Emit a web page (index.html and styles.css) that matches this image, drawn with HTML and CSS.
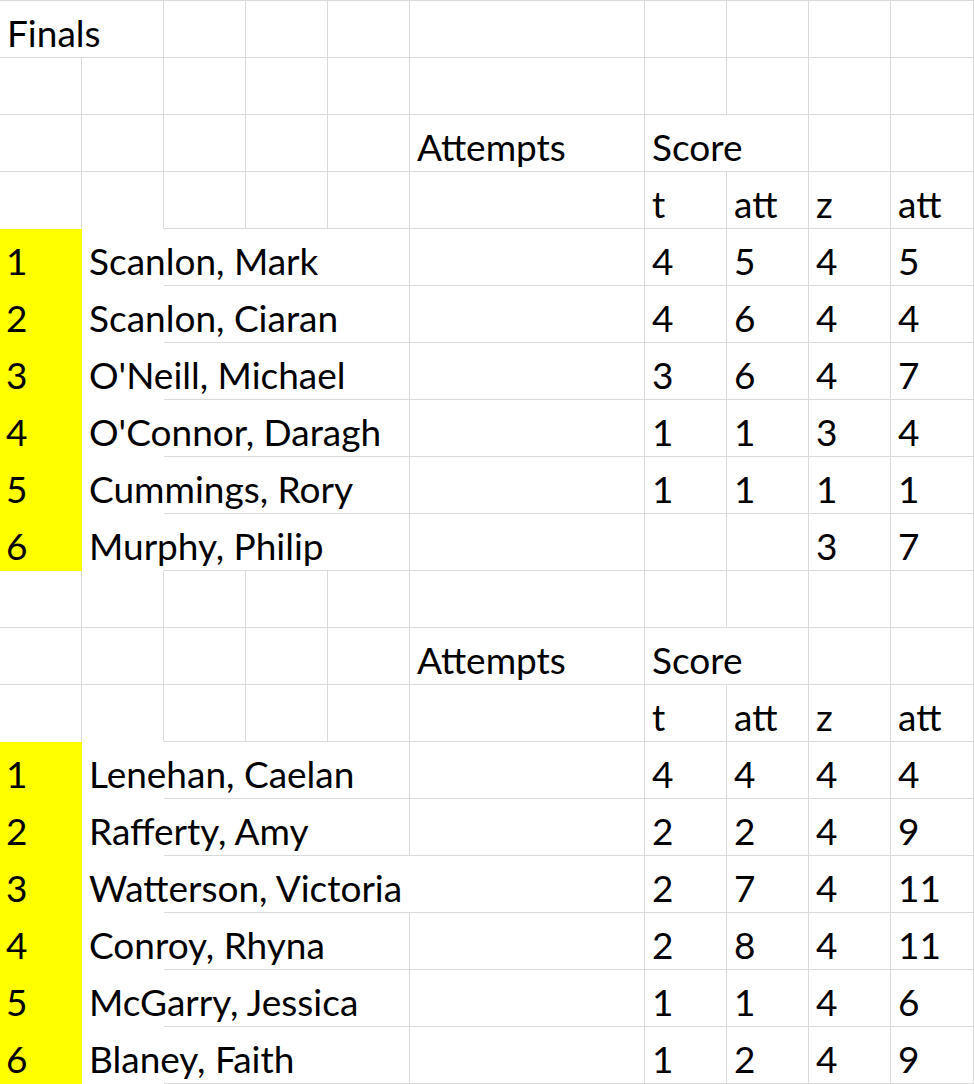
FILE: index.html
```html
<!DOCTYPE html>
<html lang="en">
<head>
<meta charset="utf-8">
<title>Finals</title>
<link rel="stylesheet" href="styles.css">
</head>
<body>
<div class="sheet">
  <!-- row 1 -->
  <div class="c span2">Finals</div><div class="c"></div><div class="c"></div><div class="c"></div><div class="c"></div><div class="c"></div><div class="c"></div><div class="c"></div><div class="c"></div>
  <!-- row 2 -->
  <div class="c"></div><div class="c"></div><div class="c"></div><div class="c"></div><div class="c"></div><div class="c"></div><div class="c"></div><div class="c"></div><div class="c"></div><div class="c"></div>
  <!-- row 3 -->
  <div class="c"></div><div class="c"></div><div class="c"></div><div class="c"></div><div class="c"></div><div class="c">Attempts</div><div class="c span2">Score</div><div class="c"></div><div class="c"></div>
  <!-- row 4 -->
  <div class="c nb"></div><div class="c nb"></div><div class="c"></div><div class="c"></div><div class="c"></div><div class="c"></div><div class="c">t</div><div class="c">att</div><div class="c">z</div><div class="c">att</div>

  <div class="c rank">1</div><div class="c name span4">Scanlon, Mark</div><div class="c"></div><div class="c">4</div><div class="c">5</div><div class="c">4</div><div class="c">5</div>
  <div class="c rank">2</div><div class="c name span4">Scanlon, Ciaran</div><div class="c"></div><div class="c">4</div><div class="c">6</div><div class="c">4</div><div class="c">4</div>
  <div class="c rank">3</div><div class="c name span4">O'Neill, Michael</div><div class="c"></div><div class="c">3</div><div class="c">6</div><div class="c">4</div><div class="c">7</div>
  <div class="c rank">4</div><div class="c name span4">O'Connor, Daragh</div><div class="c"></div><div class="c">1</div><div class="c">1</div><div class="c">3</div><div class="c">4</div>
  <div class="c rank">5</div><div class="c name span4">Cummings, Rory</div><div class="c"></div><div class="c">1</div><div class="c">1</div><div class="c">1</div><div class="c">1</div>
  <div class="c rank">6</div><div class="c name span4">Murphy, Philip</div><div class="c"></div><div class="c"></div><div class="c"></div><div class="c">3</div><div class="c">7</div>

  <!-- blank -->
  <div class="c"></div><div class="c"></div><div class="c"></div><div class="c"></div><div class="c"></div><div class="c"></div><div class="c"></div><div class="c"></div><div class="c"></div><div class="c"></div>
  <!-- header -->
  <div class="c"></div><div class="c"></div><div class="c"></div><div class="c"></div><div class="c"></div><div class="c">Attempts</div><div class="c span2">Score</div><div class="c"></div><div class="c"></div>
  <div class="c nb"></div><div class="c nb"></div><div class="c"></div><div class="c"></div><div class="c"></div><div class="c"></div><div class="c">t</div><div class="c">att</div><div class="c">z</div><div class="c">att</div>

  <div class="c rank">1</div><div class="c name span4">Lenehan, Caelan</div><div class="c"></div><div class="c">4</div><div class="c">4</div><div class="c">4</div><div class="c">4</div>
  <div class="c rank">2</div><div class="c name span4">Rafferty, Amy</div><div class="c"></div><div class="c">2</div><div class="c">2</div><div class="c">4</div><div class="c">9</div>
  <div class="c rank">3</div><div class="c name span5">Watterson, Victoria</div><div class="c">2</div><div class="c">7</div><div class="c">4</div><div class="c">11</div>
  <div class="c rank">4</div><div class="c name span4">Conroy, Rhyna</div><div class="c"></div><div class="c">2</div><div class="c">8</div><div class="c">4</div><div class="c">11</div>
  <div class="c rank">5</div><div class="c name span4">McGarry, Jessica</div><div class="c"></div><div class="c">1</div><div class="c">1</div><div class="c">4</div><div class="c">6</div>
  <div class="c rank">6</div><div class="c name span4">Blaney, Faith</div><div class="c"></div><div class="c">1</div><div class="c">2</div><div class="c">4</div><div class="c">9</div>
</div>
</body>
</html>
```

FILE: styles.css
```css
html, body {
  margin: 0;
  padding: 0;
  background: #ffffff;
}

.sheet {
  display: grid;
  grid-template-columns: 82px 82px 82px 82px 82px 235px 82px 82px 82px 83px;
  grid-auto-rows: 57px;
  width: 974px;
  border-top: 1px solid #dadada;
  font-family: Lato, "Open Sans", sans-serif;
  font-size: 37px;
  color: #000000;
}

.c {
  box-sizing: border-box;
  border-right: 1px solid #dadada;
  border-bottom: 1px solid #dadada;
  padding: 0 0 2px 7px;
  display: flex;
  align-items: flex-end;
  white-space: nowrap;
  line-height: normal;
  overflow: visible;
}

.span2 { grid-column: span 2; }
.span4 { grid-column: span 4; }
.span5 { grid-column: span 5; }

.nb { border-bottom-color: transparent; }

.rank {
  background: #ffff00;
  border-right-color: #ffff00;
  border-bottom-color: #ffff00;
  padding-left: 6px;
}

.name {
  border-bottom: 1px solid transparent;
  background-image: linear-gradient(#dadada, #dadada);
  background-repeat: no-repeat;
  background-size: calc(100% - 82px) 1px;
  background-position: right bottom;
  background-origin: border-box;
  background-clip: border-box;
}
```
